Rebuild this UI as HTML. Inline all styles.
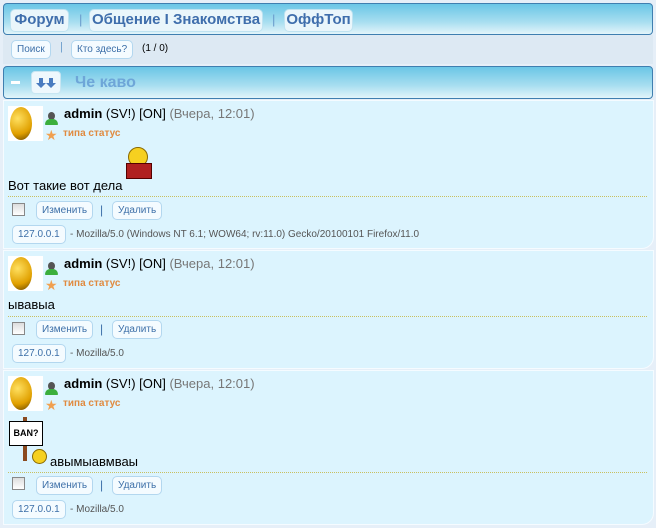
<!DOCTYPE html>
<html><head><meta charset="utf-8"><style>
*{margin:0;padding:0;box-sizing:border-box}
body{width:656px;height:528px;background:#e6eff8;font-family:"Liberation Sans",sans-serif;position:relative;overflow:hidden}
.bar{position:absolute;left:3px;width:650px;border:1px solid #3f7fb0;border-radius:4px;background:linear-gradient(#6ac6e6,#a8def0 60%,#e2f5fa)}
.tab{position:absolute;top:5px;height:23px;background:#eaf6fb;border:1px solid #bfe3f1;border-radius:5px;font:bold 15px "Liberation Sans",sans-serif;color:#3f6eac;text-align:center;line-height:20px;white-space:nowrap}
.sep{position:absolute;color:#6a9ccc;font-size:13px}
.btn{position:absolute;height:19px;background:#f4fbff;border:1px solid #b3d7ef;border-radius:5px;font:10px "Liberation Sans",sans-serif;color:#3c6fa8;padding:2px 5px;line-height:13px}
.post{position:absolute;left:3px;width:651px;background:#dcf4fe;border:1px solid #f5fbff;border-radius:0 0 12px 0}
.av{position:absolute;left:4px;top:5px;width:35px;height:35px;background:#fff;overflow:hidden}
.av div{position:absolute;left:2px;top:1px;width:22px;height:33px;border-radius:50%;background:radial-gradient(circle at 35% 35%,#ffe060,#e0a000 60%,#604000)}
.usr{position:absolute;left:40px;top:11px;width:14px;height:14px}
.usr i{position:absolute;left:4px;top:0;width:7px;height:8px;border-radius:50%;background:#555}
.usr b{position:absolute;left:1px;top:7px;width:13px;height:6px;border-radius:6px 6px 1px 1px;background:#3cae3c}
.name{position:absolute;left:60px;top:5px;font:13px "Liberation Sans",sans-serif;color:#000}
.name b{font-weight:bold}
.name span{color:#777}
.star{position:absolute;left:41px;top:26px;color:#f0a050;font-size:14px}
.stat{position:absolute;left:59px;top:27px;font:bold 10px "Liberation Sans",sans-serif;color:#e08a40}
.txt{position:absolute;left:4px;font:13px "Liberation Sans",sans-serif;color:#000}
.dot{position:absolute;left:4px;right:6px;border-top:1px dotted #c8c060}
.cb{position:absolute;left:8px;width:13px;height:13px;border:1px solid #888;background:linear-gradient(#ddd,#fff)}
.ua{position:absolute;left:66px;font:10px "Liberation Sans",sans-serif;color:#555}
.ps{position:absolute;left:96px;color:#3c6fa8;font-size:12px}
</style></head><body>
<div class="bar" style="top:3px;height:32px">
 <div class="tab" style="left:6px;width:59px">Форум</div>
 <div class="sep" style="left:75px;top:8px">|</div>
 <div class="tab" style="left:85px;width:174px">Общение I Знакомства</div>
 <div class="sep" style="left:268px;top:8px">|</div>
 <div class="tab" style="left:280px;width:69px">ОффТоп</div>
</div>
<div style="position:absolute;left:3px;top:35px;width:650px;height:29px;background:#dde9f3"></div>
<div class="btn" style="left:11px;top:40px">Поиск</div>
<div class="sep" style="left:60px;top:41px;font-size:11px">|</div>
<div class="btn" style="left:71px;top:40px">Кто здесь?</div>
<div style="position:absolute;left:142px;top:43px;font:10px 'Liberation Sans',sans-serif">(1 / 0)</div>
<div class="bar" style="top:66px;height:33px">
 <div style="position:absolute;left:7px;top:14px;width:9px;height:3px;background:#fff"></div>
 <div style="position:absolute;left:27px;top:4px;width:30px;height:23px;background:#eef8fd;border:1px solid #c8e6f2;border-radius:4px"><svg width="28" height="21" viewBox="0 0 28 21"><path d="M7 6h4v5h3l-5 5-5-5h3z M17 6h4v5h3l-5 5-5-5h3z" fill="#4a7cc0"/></svg></div>
 <div style="position:absolute;left:71px;top:7px;font:bold 16px 'Liberation Sans',sans-serif;color:#6ea6d8">Че каво</div>
</div>

<div class="post" style="top:100px;height:149px">
 <div class="av"><div></div></div><div class="usr"><i></i><b></b></div>
 <div class="name"><b>admin</b> (SV!) [ON] <span>(Вчера, 12:01)</span></div>
 <div class="star">★</div><div class="stat">типа статус</div>
 <div style="position:absolute;left:120px;top:46px;width:30px;height:36px"><div style="position:absolute;left:4px;top:0;width:20px;height:20px;border-radius:50%;background:#f6d020;border:1px solid #8a6a00"></div><div style="position:absolute;left:2px;top:16px;width:26px;height:16px;background:#b02020;border:1px solid #500"></div></div>
 <div class="txt" style="top:77px">Вот такие вот дела</div>
 <div class="dot" style="top:95px"></div>
 <div class="cb" style="top:102px"></div>
 <div class="btn" style="left:32px;top:100px">Изменить</div><div class="ps" style="top:102px">|</div>
 <div class="btn" style="left:108px;top:100px">Удалить</div>
 <div class="btn" style="left:8px;top:124px">127.0.0.1</div>
 <div class="ua" style="top:128px">- Mozilla/5.0 (Windows NT 6.1; WOW64; rv:11.0) Gecko/20100101 Firefox/11.0</div>
</div>

<div class="post" style="top:250px;height:119px">
 <div class="av"><div></div></div><div class="usr"><i></i><b></b></div>
 <div class="name"><b>admin</b> (SV!) [ON] <span>(Вчера, 12:01)</span></div>
 <div class="star">★</div><div class="stat">типа статус</div>
 <div class="txt" style="top:46px">ывавыа</div>
 <div class="dot" style="top:65px"></div>
 <div class="cb" style="top:71px"></div>
 <div class="btn" style="left:32px;top:69px">Изменить</div><div class="ps" style="top:71px">|</div>
 <div class="btn" style="left:108px;top:69px">Удалить</div>
 <div class="btn" style="left:8px;top:93px">127.0.0.1</div>
 <div class="ua" style="top:97px">- Mozilla/5.0</div>
</div>

<div class="post" style="top:370px;height:155px">
 <div class="av"><div></div></div><div class="usr"><i></i><b></b></div>
 <div class="name"><b>admin</b> (SV!) [ON] <span>(Вчера, 12:01)</span></div>
 <div class="star">★</div><div class="stat">типа статус</div>
 <div style="position:absolute;left:19px;top:46px;width:4px;height:44px;background:#8a4a20"></div>
 <div style="position:absolute;left:5px;top:50px;width:34px;height:25px;background:#fff;border:1px solid #000;font:bold 9px 'Liberation Sans',sans-serif;text-align:center;line-height:23px">BAN?</div>
 <div style="position:absolute;left:28px;top:78px;width:15px;height:15px;border-radius:50%;background:#f6d020;border:1px solid #8a6a00"></div>
 <div class="txt" style="top:83px;left:46px">авымыавмваы</div>
 <div class="dot" style="top:101px"></div>
 <div class="cb" style="top:106px"></div>
 <div class="btn" style="left:32px;top:105px">Изменить</div><div class="ps" style="top:107px">|</div>
 <div class="btn" style="left:108px;top:105px">Удалить</div>
 <div class="btn" style="left:8px;top:129px">127.0.0.1</div>
 <div class="ua" style="top:133px">- Mozilla/5.0</div>
</div>
</body></html>
